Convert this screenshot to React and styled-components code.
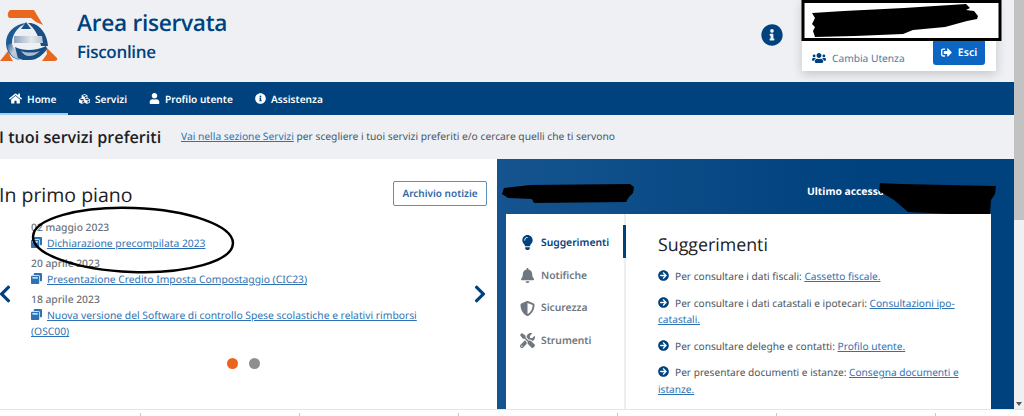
import React from 'react';
import styled, { createGlobalStyle } from 'styled-components';
import {
  FaHome, FaCubes, FaUser, FaInfoCircle, FaUsers, FaSignOutAlt, FaWindowRestore,
  FaChevronLeft, FaChevronRight, FaLightbulb, FaBell, FaShieldAlt, FaTools, FaArrowCircleRight,
} from 'react-icons/fa';

const Global = createGlobalStyle`
  html, body { margin: 0; padding: 0; overflow: hidden; }
  body {
    font-family: "Noto Sans", "Open Sans", sans-serif;
    background: #fff;
    text-rendering: geometricPrecision;
  }
  * { box-sizing: border-box; }
`;

const Shell = styled.div`
  position: relative;
  width: 1024px;
  height: 416px;
  overflow: hidden;
  display: flex;
  flex-direction: column;
`;
const Window = styled.div`
  height: 409px;
  display: flex;
`;
const Page = styled.div`
  width: 1014px;
  display: flex;
  flex-direction: column;
  background: #eef0f3;
`;
const Scrollbar = styled.div`
  width: 10px;
  background: #f0f0f3;
  display: flex;
  flex-direction: column;
  justify-content: space-between;
  align-items: center;
`;
const Thumb = styled.div`
  width: 100%;
  height: 220px;
  background: #c2c2c2;
`;
const ScrollArrow = styled.div`
  width: 0;
  height: 0;
  margin-bottom: 3px;
  border-left: 3px solid transparent;
  border-right: 3px solid transparent;
  border-top: 4px solid #555;
`;
const Footer = styled.div`
  flex: 1;
  border-top: 1px solid #e4e4e6;
  display: flex;
  padding-left: 140px;
  gap: 158px;
`;
const Tick = styled.span`
  width: 1px;
  height: 3px;
  margin-top: 3px;
  background: #c8c8c8;
`;

const Header = styled.header`
  height: 82px;
  display: flex;
  align-items: flex-start;
`;
const Logo = styled.svg`
  width: 58px;
  height: 64px;
  flex: none;
`;
const Titles = styled.div`
  margin-left: 19px;
  padding-top: 7px;
  color: #00427e;
  font-family: "Open Sans", sans-serif;
`;
const Title = styled.div`
  font-size: 22.7px;
  line-height: 32px;
  font-weight: 600;
  letter-spacing: -0.3px;
`;
const Subtitle = styled.div`
  font-size: 17px;
  line-height: 25px;
  font-weight: 600;
  letter-spacing: -0.3px;
`;
const InfoButton = styled.div`
  margin-left: auto;
  margin-top: 24px;
  margin-right: 19px;
  color: #00427e;
  font-size: 22px;
  line-height: 0;
`;
const UserCard = styled.div`
  width: 194px;
  height: 71px;
  margin-right: 18px;
  background: #fff;
  box-shadow: 0 3px 10px rgba(0, 0, 0, 0.18);
`;
const UserRow = styled.div`
  padding: 40px 11px 0 10px;
  display: flex;
  justify-content: space-between;
  align-items: flex-start;
`;
const SwitchUser = styled.div`
  display: flex;
  align-items: center;
  gap: 6px;
  margin-top: 10px;
  color: #4a7aa8;
  font-size: 10.2px;
  line-height: 16px;
`;
const ExitButton = styled.div`
  width: 52px;
  height: 25px;
  display: flex;
  align-items: center;
  justify-content: center;
  gap: 6px;
  background: #0a66c2;
  color: #fff;
  border-radius: 0 0 3px 3px;
  font-size: 10.5px;
  font-weight: 600;
`;

const Nav = styled.nav`
  height: 33px;
  background: #00427e;
  display: flex;
`;
const NavItem = styled.div`
  display: flex;
  align-items: center;
  gap: 5px;
  padding: 0 11px 0 ${(p) => (p.$first ? '9px' : '11px')};
  width: ${(p) => p.$w}px;
  color: #fff;
  font-size: 10.1px;
  font-weight: 600;
  white-space: nowrap;
  box-shadow: ${(p) => (p.$active ? 'inset 0 -2px 0 #9fd0f2' : 'none')};
`;

const Favourites = styled.div`
  height: 44px;
  display: flex;
  align-items: center;
`;
const FavTitle = styled.h2`
  margin: 0 0 0 -1px;
  font-family: "Open Sans", sans-serif;
  font-size: 16.2px;
  font-weight: 600;
  color: #1c2024;
  width: 182px;
`;
const FavText = styled.p`
  margin: 0;
  font-size: 10.25px;
  color: #4c5560;
`;
const TextLink = styled.a`
  color: #2f72b4;
  text-decoration: underline;
`;

const Panels = styled.div`
  flex: 1;
  min-height: 0;
  display: flex;
`;
const NewsPanel = styled.section`
  width: 497px;
  background: #fff;
  padding: 21px 10px 0 0;
`;
const NewsHead = styled.div`
  display: flex;
  justify-content: space-between;
  align-items: center;
`;
const NewsTitle = styled.h2`
  margin: 0 0 0 -1px;
  font-family: "Open Sans", sans-serif;
  font-size: 19.5px;
  line-height: 30px;
  font-weight: 500;
  color: #1c2024;
`;
const ArchiveButton = styled.div`
  width: 94px;
  height: 25px;
  margin-top: -4px;
  display: flex;
  align-items: center;
  justify-content: center;
  border: 1px solid #5b8fb5;
  border-radius: 2px;
  color: #2f6aa6;
  font-size: 10px;
  font-weight: 600;
`;
const Carousel = styled.div`
  margin-top: 10px;
  display: flex;
  align-items: center;
`;
const Arrow = styled.div`
  flex: none;
  width: ${(p) => p.$w}px;
  display: flex;
  justify-content: ${(p) => (p.$right ? 'flex-end' : 'flex-start')};
  color: #00427e;
  font-size: 20px;
  margin: 25px ${(p) => (p.$right ? '-3px' : '0')} 0 ${(p) => (p.$right ? '0' : '-5px')};
`;
const NewsList = styled.div`
  flex: 1;
  font-size: 10.3px;
  line-height: 16.4px;
  padding-right: 36px;
`;
const NewsDate = styled.div`
  color: #6b7178;
  font-weight: 500;
`;
const NewsItem = styled.div`
  margin-bottom: 3px;
  color: #2f72b4;
  svg {
    vertical-align: -1px;
    margin-right: ${(p) => p.$gap}px;
    font-size: 11px;
    color: #2f72b4;
  }
`;
const Dots = styled.div`
  margin-top: 14px;
  padding-left: 227px;
  display: flex;
  gap: 11px;
`;
const Dot = styled.span`
  width: 11px;
  height: 11px;
  border-radius: 50%;
  background: ${(p) => (p.$active ? '#e9641e' : '#8f8f8f')};
`;

const AccountPanel = styled.section`
  flex: 1;
  min-width: 0;
  background: linear-gradient(90deg, #15548f 0%, #00427e 70%);
  padding: 0 23px 0 9px;
  display: flex;
  flex-direction: column;
`;
const AccountTop = styled.div`
  height: 55px;
  flex: none;
  padding: 11px 0 0 301px;
  display: flex;
  align-items: center;
  color: #fff;
  font-size: 10.3px;
  font-weight: 700;
`;
const AccountCard = styled.div`
  flex: 1;
  min-height: 0;
  background: #fff;
  display: flex;
`;
const SideMenu = styled.div`
  width: 120px;
  padding-top: 11px;
  border-right: 2px solid #eceef0;
  flex: none;
`;
const MenuItem = styled.div`
  height: 32.7px;
  margin-right: -2px;
  padding: 3px 0 0 14px;
  display: flex;
  align-items: center;
  gap: 6px;
  color: ${(p) => (p.$active ? '#00427e' : '#6f7780')};
  font-size: 10.3px;
  font-weight: 600;
  border-right: 3px solid ${(p) => (p.$active ? '#00427e' : 'transparent')};
  svg {
    width: 15px;
    font-size: 15px;
  }
`;
const TipBody = styled.div`
  flex: 1;
  min-width: 0;
  padding: 19px 24px 0 32px;
`;
const TipTitle = styled.h2`
  margin: 0 0 11px;
  font-family: "Open Sans", sans-serif;
  font-size: 17.8px;
  line-height: 24px;
  font-weight: 500;
  color: #1c2024;
`;
const Tip = styled.p`
  margin: 0 0 10px;
  font-size: 10.15px;
  line-height: 16.5px;
  color: #4c5560;
  svg {
    color: #00427e;
    font-size: 11px;
    vertical-align: -1px;
    margin-right: 6px;
  }
`;

// redactions and pen marks drawn on top of the screenshot
const Markup = styled.svg`
  position: absolute;
  inset: 0;
  width: 1024px;
  height: 416px;
  pointer-events: none;
`;

const tips = [
  ['Per consultare i dati fiscali: ', 'Cassetto fiscale.'],
  ['Per consultare i dati catastali e ipotecari: ', 'Consultazioni ipo-catastali.'],
  ['Per consultare deleghe e contatti: ', 'Profilo utente.'],
  ['Per presentare documenti e istanze: ', 'Consegna documenti e istanze.'],
];

const App = () => (
  <>
    <Global />
    <Shell>
      <Window>
        <Page>
          <Header>
            <Logo viewBox="0 0 58 64">
              <defs>
                <linearGradient id="ring" x1="0" y1="0" x2="1" y2="0.6">
                  <stop offset="0" stopColor="#1c5a94" />
                  <stop offset="0.5" stopColor="#c7d0db" />
                  <stop offset="1" stopColor="#9fb0c4" />
                </linearGradient>
                <linearGradient id="bar" x1="0" y1="0" x2="1" y2="0">
                  <stop offset="0" stopColor="#8ea3bb" />
                  <stop offset="0.6" stopColor="#e4e8ed" />
                  <stop offset="1" stopColor="#b9c4d1" />
                </linearGradient>
              </defs>
              <path d="M10 10h24l9 15-7-3-5-4H9q-3-4 1-8z" fill="#e8681f" />
              <path d="M0 61l8-10 3 7 2 3zM46 47l11 11q1 3-3 3H42l5-7z" fill="#e8681f" />
              <path d="M26 23C14 24 6 33 6 43c0 8 5 15 13 17 -3-4-7-9-7-17 0-8 5-15 11-18z" fill="#1c5a94" />
              <path d="M7 45c1 7 6 14 14 15l4-8-10-3c-2-2-3-3-3-6z" fill="url(#ring)" />
              <path d="M31 23c9 2 16 10 17 23l-7 0-1-4c-2-7-5-13-12-19z" fill="#1a4f85" />
              <path d="M26 22l5 7H21z" fill="#1a4f85" />
              <path d="M20 31h12l4 5H16z" fill="#eceff3" />
              <path d="M14 36h28l1 7H14z" fill="url(#bar)" />
              <path d="M15 47c8 4 21 4 31-1l1 3c-4 6-10 11-17 11h-7l-5-2-3-11z" fill="#1a4f85" />
              <path d="M21 51c6 2 13 2 19 0-3 3-7 5-11 5-3 0-6-2-8-5z" fill="#aebccb" />
            </Logo>
            <Titles>
              <Title>Area riservata</Title>
              <Subtitle>Fisconline</Subtitle>
            </Titles>
            <InfoButton><FaInfoCircle /></InfoButton>
            <UserCard>
              <UserRow>
                <SwitchUser><FaUsers size={14} color="#00427e" /> Cambia Utenza</SwitchUser>
                <ExitButton><FaSignOutAlt size={11} /> Esci</ExitButton>
              </UserRow>
            </UserCard>
          </Header>
          <Nav>
            <NavItem $first $active $w={68}><FaHome size={13} /> Home</NavItem>
            <NavItem $w={70}><FaCubes size={12} /> Servizi</NavItem>
            <NavItem $w={106}><FaUser size={11} /> Profilo utente</NavItem>
            <NavItem><FaInfoCircle size={11} /> Assistenza</NavItem>
          </Nav>
          <Favourites>
            <FavTitle>I tuoi servizi preferiti</FavTitle>
            <FavText>
              <TextLink>Vai nella sezione Servizi</TextLink> per scegliere i tuoi servizi preferiti e/o cercare quelli che ti servono
            </FavText>
          </Favourites>
          <Panels>
            <NewsPanel>
              <NewsHead>
                <NewsTitle>In primo piano</NewsTitle>
                <ArchiveButton>Archivio notizie</ArchiveButton>
              </NewsHead>
              <Carousel>
                <Arrow $w={36}><FaChevronLeft /></Arrow>
                <NewsList>
                  <NewsDate>02 maggio 2023</NewsDate>
                  <NewsItem $gap={5}><FaWindowRestore /><TextLink>Dichiarazione precompilata 2023</TextLink></NewsItem>
                  <NewsDate>20 aprile 2023</NewsDate>
                  <NewsItem $gap={5}><FaWindowRestore /><TextLink>Presentazione Credito Imposta Compostaggio (CIC23)</TextLink></NewsItem>
                  <NewsDate>18 aprile 2023</NewsDate>
                  <NewsItem $gap={5}><FaWindowRestore /><TextLink>Nuova versione del Software di controllo Spese scolastiche e relativi rimborsi (OSC00)</TextLink></NewsItem>
                </NewsList>
                <Arrow $w={20} $right><FaChevronRight /></Arrow>
              </Carousel>
              <Dots><Dot $active /><Dot /></Dots>
            </NewsPanel>
            <AccountPanel>
              <AccountTop>Ultimo accesso</AccountTop>
              <AccountCard>
                <SideMenu>
                  <MenuItem $active><FaLightbulb /> Suggerimenti</MenuItem>
                  <MenuItem><FaBell /> Notifiche</MenuItem>
                  <MenuItem><FaShieldAlt /> Sicurezza</MenuItem>
                  <MenuItem><FaTools /> Strumenti</MenuItem>
                </SideMenu>
                <TipBody>
                  <TipTitle>Suggerimenti</TipTitle>
                  {tips.map(([text, link]) => (
                    <Tip key={link}><FaArrowCircleRight />{text}<TextLink>{link}</TextLink></Tip>
                  ))}
                </TipBody>
              </AccountCard>
            </AccountPanel>
          </Panels>
        </Page>
        <Scrollbar>
          <Thumb />
          <ScrollArrow />
        </Scrollbar>
      </Window>
      <Footer>
        <Tick /><Tick /><Tick /><Tick /><Tick /><Tick />
      </Footer>
      <Markup viewBox="0 0 1024 416">
        <rect x="803" y="1.5" width="197" height="38" fill="#fff" stroke="#000" strokeWidth="3" />
        <path d="M807 10l5 3 32-2 60-3 62-4 4 4-4 2 8 1 4 5-1 3-10 2-22 6-32 3-10 4-48 2-40 1-2-6 2-4-3-3 3-6-3-5z" fill="#000" />
        <path d="M504 188l26-3 100-1 4 3-1 6-4 4-3 5-92 1-2-4-24-1-6-4z" fill="#000" />
        <path d="M880 183l20 1 96 2-1 8-4 6-1 14-40 0-42-2-14-12-15-9z" fill="#000" />
        <ellipse cx="133" cy="240" rx="100" ry="32" fill="none" stroke="#000" strokeWidth="2.5" transform="rotate(2 133 240)" />
      </Markup>
    </Shell>
  </>
);

export default App;
